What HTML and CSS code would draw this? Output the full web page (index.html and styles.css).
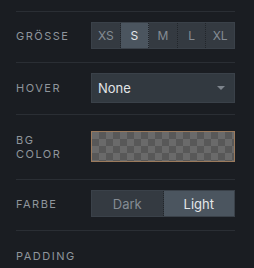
FILE: index.html
```html
<!DOCTYPE html>
<html lang="de">
<head>
  <meta charset="UTF-8" />
  <title>Einstellungen</title>
  <link rel="stylesheet" href="styles.css">
</head>
<body>
  <div class="panel">
    <div class="row row-size">
      <div class="label">Grösse</div>
      <div class="segmented">
        <div class="seg">XS</div>
        <div class="seg active">S</div>
        <div class="seg">M</div>
        <div class="seg">L</div>
        <div class="seg">XL</div>
      </div>
    </div>

    <div class="row row-hover">
      <div class="label">Hover</div>
      <div class="select">
        <span>None</span>
        <span class="arrow"></span>
      </div>
    </div>

    <div class="row row-bg">
      <div class="label">BG<br>Color</div>
      <div class="swatch"></div>
    </div>

    <div class="row row-color">
      <div class="label">Farbe</div>
      <div class="segmented wide">
        <div class="seg">Dark</div>
        <div class="seg active">Light</div>
      </div>
    </div>

    <div class="row row-padding">
      <div class="label">Padding</div>
    </div>
  </div>
</body>
</html>
```

FILE: styles.css
```css
body {
  margin: 0;
  background-color: #1a1d22;
  font-family: Inter, "Noto Sans", sans-serif;
}

.panel {
  padding: 11px 19px 0 16px;
}

.row {
  display: flex;
  align-items: center;
  border-top: 1px solid #2a2e34;
}

.row-size { padding: 10px 0 13px; }
.row-hover { padding: 10px 0 11px; }
.row-bg { padding: 16px 0 17px; }
.row-color { padding: 10px 0 13px; }
.row-padding { padding: 18px 0 10px; }

.label {
  width: 75px;
  flex-shrink: 0;
  font-size: 11px;
  line-height: 14px;
  letter-spacing: 1.5px;
  text-transform: uppercase;
  color: #8f959c;
}

.segmented {
  flex: 1;
  display: flex;
  height: 27px;
  box-sizing: border-box;
  border: 1px solid #3a4149;
  background-color: #343a41;
}

.seg {
  flex: 1;
  display: flex;
  align-items: center;
  justify-content: center;
  font-size: 12px;
  color: #858c94;
  border-right: 1px dotted #22262b;
}

.seg:last-child {
  border-right: none;
}

.seg.active {
  background-color: #4b555f;
  color: #e4e7ea;
}

.wide .seg {
  font-size: 13px;
}

.select {
  flex: 1;
  height: 30px;
  box-sizing: border-box;
  display: flex;
  align-items: center;
  justify-content: space-between;
  padding: 0 9px 0 6px;
  background-color: #323940;
  border: 1px solid #3a4149;
  font-size: 13px;
  color: #e2e5e8;
}

.arrow {
  width: 0;
  height: 0;
  border-left: 4px solid transparent;
  border-right: 4px solid transparent;
  border-top: 4px solid #7d848c;
}

.swatch {
  flex: 1;
  height: 31px;
  box-sizing: border-box;
  border: 1px solid #9b7a5c;
  background-color: #6a6a6a;
  background-image:
    linear-gradient(45deg, #585858 25%, transparent 25%, transparent 75%, #585858 75%),
    linear-gradient(45deg, #585858 25%, transparent 25%, transparent 75%, #585858 75%);
  background-size: 14px 14px;
  background-position: 0 0, 7px 7px;
}
```
